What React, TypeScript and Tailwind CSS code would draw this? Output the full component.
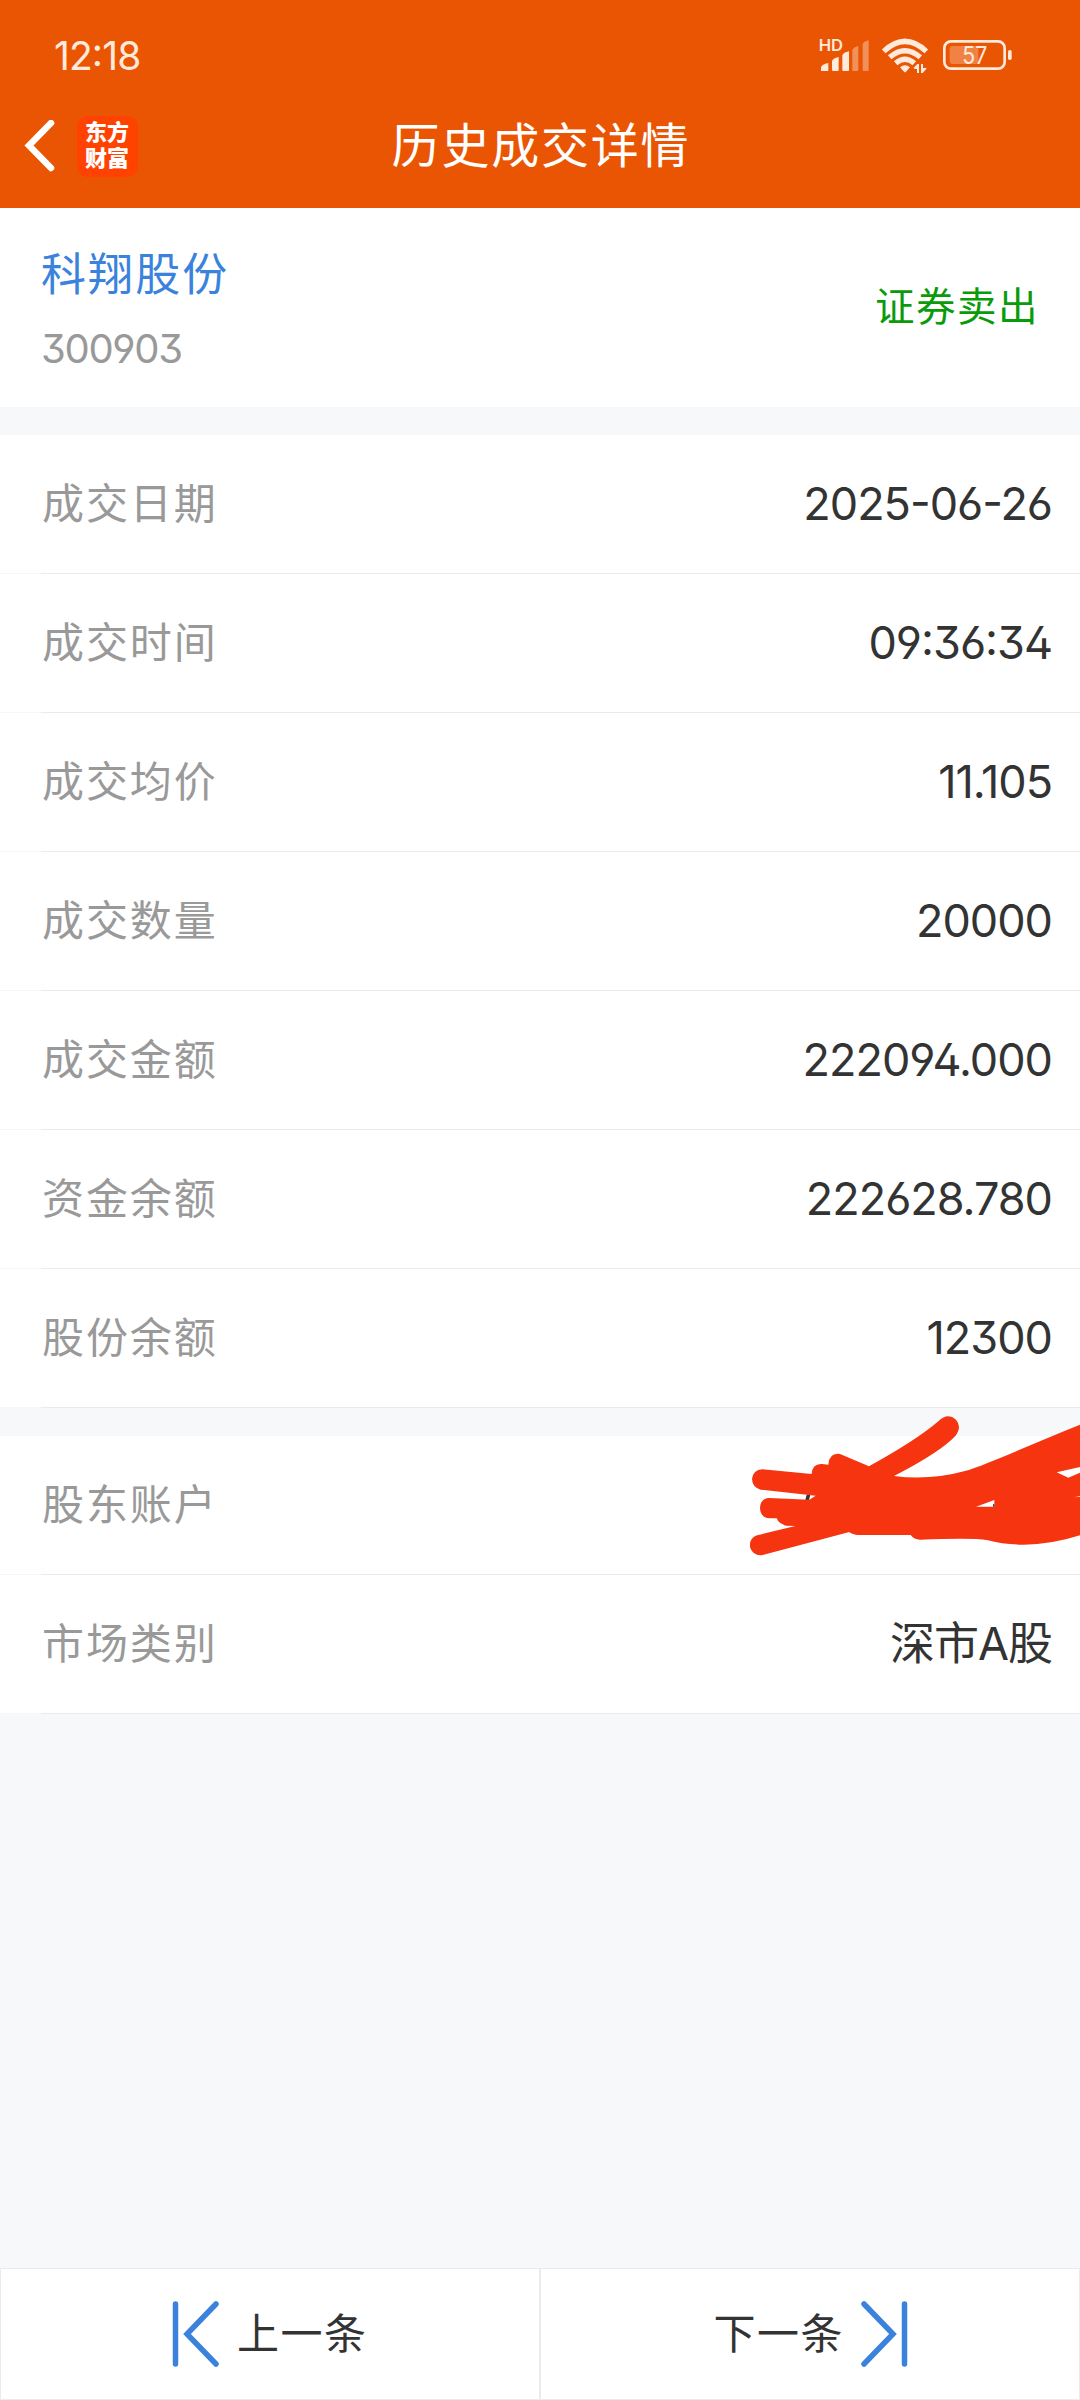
interface DetailRow {
  label: string;
  value: string;
}

const tradeRows: DetailRow[] = [
  { label: '成交日期', value: '2025-06-26' },
  { label: '成交时间', value: '09:36:34' },
  { label: '成交均价', value: '11.105' },
  { label: '成交数量', value: '20000' },
  { label: '成交金额', value: '222094.000' },
  { label: '资金余额', value: '222628.780' },
  { label: '股份余额', value: '12300' },
];

function StatusIcons() {
  return (
    <svg viewBox="0 0 780 210" className="w-[260px] h-[70px]" fill="#ffeadc">
      <text x="116" y="93" fontSize="46" fontWeight="600" textLength="73" lengthAdjust="spacingAndGlyphs">HD</text>
      <path d="M123 152V142Q125 133 145 129V152Q145 153 141 153H126Q123 153 123 152Z" />
      <path d="M156 150V123Q159 114 176 111V150Q176 153 173 153H159Q156 153 156 150Z" />
      <path d="M187 150V106Q190 97 207 94V150Q207 153 204 153H190Q187 153 187 150Z" />
      <g opacity=".4">
        <path d="M217 150V91Q219 82 235 78V150Q235 153 232 153H220Q217 153 217 150Z" />
        <path d="M248 150V73Q250 64 266 61V150Q266 153 263 153H251Q248 153 248 150Z" />
      </g>
      <g fill="none" stroke="#ffeadc" strokeWidth="16">
        <path d="M311 94Q375 34 439 94" />
        <path d="M329 112Q375 72 421 112" />
        <path d="M347 130Q375 105 403 130" />
      </g>
      <path d="M360 142Q375 129 390 142L378 155Q375 158 372 155Z" />
      <path d="M401 143L412 132H417V159H411V147H404ZM423 132H429V144H440L437 149L428 159H423Z" />
      <rect x="493" y="64" width="181" height="82" rx="20" fill="none" stroke="#ffeadc" strokeWidth="8" />
      <rect x="509" y="78" width="86" height="54" rx="9" opacity=".3" />
      <text x="547" y="132" fontSize="72" textLength="75" lengthAdjust="spacingAndGlyphs">57</text>
      <rect x="684" y="90" width="11" height="30" rx="5" />
    </svg>
  );
}

// Hand drawn strokes that hide the account number
function Scribble() {
  return (
    <svg viewBox="0 0 1080 540" className="absolute right-0 -top-[46px] w-[360px] h-[180px]">
      <path d="M260 314H271L267 330H256Z" fill="#333" />
      <path
        fill="#f63410"
        d="M127 238L275 252Q277 220 306 222L325 224Q327 188 360 192L447 229Q590 150 655 94Q683 67 708 89Q727 111 706 138Q660 187 522 258Q630 272 735 243C800 225 950 155 1080 104V231L1010 247L1045 263L1080 248V318L1062 322L1080 320V436Q930 484 800 450Q760 443 600 449Q582 449 572 435H415Q397 434 388 426L128 495Q101 499 91 475Q85 446 111 436L226 408L198 407Q176 401 170 385H148Q121 382 120 354Q121 326 147 324L268 329L287 317L122 299Q97 292 96 267Q99 240 127 238Z"
      />
      <path d="M768 350L823 330V350Z" fill="#fff" />
      <path d="M819 343H823V350H819Z" fill="#333" />
    </svg>
  );
}

function Row({ label, value, masked }: { label: string; value: string; masked?: boolean }) {
  return (
    <div className="relative flex h-[139px] items-center justify-between bg-white pb-[2px] pl-[42px] pr-[28px]">
      <span className="text-[42px] tracking-[1.9px] text-[#999]">{label}</span>
      <span className="text-[45px] tracking-[-1px] text-[#333]">{value}</span>
      <div className="absolute bottom-0 left-0 h-px w-full bg-[#f7f7f7]" />
      <div className="absolute bottom-0 left-[41px] right-0 h-px bg-[#ebebeb]" />
      {masked && <Scribble />}
    </div>
  );
}

export default function App() {
  return (
    <div className="flex h-[2400px] w-[1080px] flex-col overflow-hidden bg-[#f7f8fa] font-[Inter,'Noto_Sans_CJK_SC',sans-serif] leading-none [font-feature-settings:'ss01','cv03','cv04','cv09','case']">
      <header className="h-[208px] bg-[#ea5504] text-white">
        <div className="flex h-[84px] items-center justify-between pl-[54px] pr-[40px] pt-[26px]">
          <span className="text-[39px] tracking-[-0.9px] text-[#ffeadc]">12:18</span>
          <StatusIcons />
        </div>
        <div className="grid h-[124px] grid-cols-[1fr_auto_1fr] items-center">
          <div className="flex items-center pl-[24px]">
            <svg viewBox="0 0 32 52" className="h-[52px] w-[32px]" fill="none" stroke="#fff" strokeWidth="6.5" strokeLinecap="round">
              <path d="M27 3L5 25.5L27 48" />
            </svg>
            <div className="ml-[21px] flex h-[61px] w-[61px] flex-col items-center justify-center rounded-[11px] bg-[#ff4200] pb-[2px] pr-[1px] text-[22px] font-black leading-[26px]">
              <span>东方</span>
              <span>财富</span>
            </div>
          </div>
          <h1 className="pl-[2px] text-[48px] tracking-[1.8px]">历史成交详情</h1>
          <div />
        </div>
      </header>

      <section className="flex h-[199px] items-center justify-between bg-white pl-[41px] pr-[41px]">
        <div className="flex flex-col gap-[32px] pt-[6px]">
          <span className="text-[45px] tracking-[2.1px] text-[#3a82dc]">科翔股份</span>
          <span className="text-[40px] tracking-[-1.3px] text-[#999]">300903</span>
        </div>
        <span className="text-[39.5px] tracking-[1.5px] text-[#0a9b0a]">证券卖出</span>
      </section>

      <section className="mt-[28px]">
        {tradeRows.map((row) => (
          <Row key={row.label} label={row.label} value={row.value} />
        ))}
      </section>

      <section className="mt-[28px]">
        <Row label="股东账户" value="" masked />
        <Row label="市场类别" value="深市A股" />
      </section>

      <footer className="mt-auto grid h-[132px] grid-cols-2 text-[42px] tracking-[1.5px] text-[#333]">
        <button className="flex items-center border border-[#ebebeb] bg-white pb-[1px] pl-[171px]">
          <svg viewBox="0 0 48 66" className="h-[66px] w-[48px]" fill="none" stroke="#3a82dc" strokeWidth="5.5" strokeLinecap="round">
            <path d="M3.5 3V63M44 3L15 33L44 63" />
          </svg>
          <span className="ml-[17px]">上一条</span>
        </button>
        <button className="flex items-center justify-end border border-[#ebebeb] bg-white pb-[1px] pr-[171px]">
          <span className="mr-[16px]">下一条</span>
          <svg viewBox="0 0 48 66" className="h-[66px] w-[48px]" fill="none" stroke="#3a82dc" strokeWidth="5.5" strokeLinecap="round">
            <path d="M44.5 3V63M4 3L33 33L4 63" />
          </svg>
        </button>
      </footer>
    </div>
  );
}
